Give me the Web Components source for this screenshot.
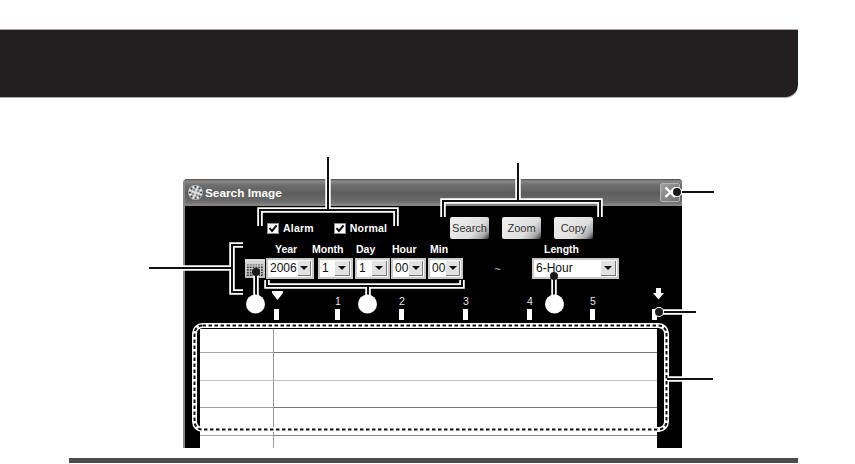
<!DOCTYPE html>
<html>
<head>
<meta charset="utf-8">
<title>Search Image</title>
<style>
  html, body { margin: 0; background: #fff; overflow: hidden; }
  body { position: relative; width: 855px; height: 464px; font-family: "Liberation Sans", Arial, sans-serif; }
</style>
</head>
<body>
  <page-banner></page-banner>
  <search-window>
    <check-row slot="checks">
      <check-box>Alarm</check-box>
      <check-box>Normal</check-box>
    </check-row>
    <win-button slot="buttons">Search</win-button>
    <win-button slot="buttons">Zoom</win-button>
    <win-button slot="buttons">Copy</win-button>
  </search-window>
  <page-rule></page-rule>
  <call-outs></call-outs>

<script>
class PageBanner extends HTMLElement {
  constructor() {
    super();
    this.attachShadow({ mode: 'open' });
  }
  connectedCallback() {
    this.shadowRoot.innerHTML = `
      <style>
        :host {
          display: block;
          box-sizing: border-box;
          width: 798px;
          height: 69px;
          margin-top: 29px;
          background: #231f20;
          border-top: 1px solid #a9a7a7;
          border-bottom: 1px solid #a9a7a7;
          border-bottom-right-radius: 13px;
        }
      </style>`;
  }
}

class PageRule extends HTMLElement {
  constructor() {
    super();
    this.attachShadow({ mode: 'open' });
  }
  connectedCallback() {
    this.shadowRoot.innerHTML = `
      <style>
        :host { display: block; width: 729px; height: 5px; margin: 10px 0 0 69px; background: #4b4b4b; }
      </style>`;
  }
}

class CheckRow extends HTMLElement {
  constructor() {
    super();
    this.attachShadow({ mode: 'open' });
  }
  connectedCallback() {
    this.shadowRoot.innerHTML = `
      <style>
        :host { display: flex; align-items: center; gap: 20px; }
      </style>
      <slot></slot>`;
  }
}

class CheckBox extends HTMLElement {
  constructor() {
    super();
    this.attachShadow({ mode: 'open' });
  }
  connectedCallback() {
    this.shadowRoot.innerHTML = `
      <style>
        :host { display: flex; align-items: center; gap: 4px; color: #fff; font: bold 10.5px "Liberation Sans", Arial, sans-serif; letter-spacing: 0.2px; }
        svg { display: block; }
      </style>
      <svg width="12" height="11" viewBox="0 0 12 11">
        <rect x="0.5" y="0.5" width="11" height="10" fill="#fff" stroke="#8d8d8d"/>
        <path d="M2.5 5.2 L5 8 L9.6 2.4" fill="none" stroke="#111" stroke-width="2"/>
      </svg>
      <span><slot></slot></span>`;
  }
}

class WinButton extends HTMLElement {
  constructor() {
    super();
    this.attachShadow({ mode: 'open' });
  }
  connectedCallback() {
    this.shadowRoot.innerHTML = `
      <style>
        :host {
          display: flex;
          align-items: center;
          justify-content: center;
          width: 39px;
          height: 22px;
          border-radius: 2px;
          color: #333;
          font: 11px "Liberation Sans", Arial, sans-serif;
          background: linear-gradient(135deg, #f0f0f0 0%, #dedede 65%, #a8a8a8 85%, #333 100%);
        }
      </style>
      <slot></slot>`;
  }
}

class ComboBox extends HTMLElement {
  constructor() {
    super();
    this.attachShadow({ mode: 'open' });
  }
  connectedCallback() {
    this.shadowRoot.innerHTML = `
      <style>
        :host {
          display: flex;
          box-sizing: border-box;
          height: 21px;
          padding: 1px;
          gap: 1px;
          background: #fff;
          border: 2px solid #c8c8c8;
          align-items: stretch;
          color: #111;
          font: 12px "Liberation Sans", Arial, sans-serif;
        }
        .value { flex: 1; padding-left: 1px; line-height: 15px; white-space: nowrap; }
        .arrow {
          display: flex;
          align-items: center;
          justify-content: center;
          width: 15px;
          background: #e2e2e2;
          border-right: 1px solid #777;
          border-bottom: 1px solid #777;
          box-sizing: border-box;
        }
        .arrow i { width: 0; height: 0; border: 4px solid transparent; border-top: 4px solid #111; border-bottom: 0; }
      </style>
      <span class="value"><slot></slot></span>
      <span class="arrow"><i></i></span>`;
  }
}

class TimeLine extends HTMLElement {
  constructor() {
    super();
    this.attachShadow({ mode: 'open' });
  }
  connectedCallback() {
    const widths = [61, 64, 64, 64, 63, 62, 5];
    const labels = ['', '1', '2', '3', '4', '5', ''];
    const cells = widths.map((w, i) => `
      <div class="cell" style="width:${w}px">
        <span class="num">${labels[i]}</span>
        <span class="tick"></span>
      </div>`).join('');
    this.shadowRoot.innerHTML = `
      <style>
        :host { display: flex; position: relative; height: 41px; margin-left: 89px; color: #e6e6e6; font: 10.5px "Liberation Sans", Arial, sans-serif; }
        .cell { display: flex; flex-direction: column; flex: none; }
        .num { width: 5px; height: 30px; padding-top: 17px; box-sizing: border-box; line-height: 11px; text-align: center; }
        .tick { width: 4.5px; height: 11px; background: #fff; }
        svg { position: absolute; top: 0; left: 0; overflow: visible; }
      </style>
      ${cells}
      <svg width="1" height="1">
        <path d="M-2 12 H9 V14 L3.5 21 L-2 14 Z" fill="#fff"/>
        <path d="M382 9 H387 V14 H390 L384.5 20.5 L379 14 H382 Z" fill="#fff"/>
      </svg>`;
  }
}

class DataGrid extends HTMLElement {
  constructor() {
    super();
    this.attachShadow({ mode: 'open' });
  }
  connectedCallback() {
    const rows = [
      [24, '#a8a8a8', '#777'],
      [28, '#c4c4c4', '#bdbdbd'],
      [27, '#a0a0a0', '#777'],
      [28, '#a8a8a8', '#888'],
      [12, 'transparent', 'transparent']
    ];
    const html = rows.map(r => `
      <div class="row" style="height:${r[0]}px">
        <div class="a" style="border-bottom-color:${r[1]}"></div>
        <div class="b" style="border-bottom-color:${r[2]}"></div>
      </div>`).join('');
    this.shadowRoot.innerHTML = `
      <style>
        :host { display: block; width: 457px; margin-left: 15px; background: #fff; }
        .row { display: grid; grid-template-columns: 74px 1fr; box-sizing: border-box; }
        .a, .b { border-bottom: 1px solid; box-sizing: border-box; }
        .a { border-right: 1px solid #999; }
      </style>
      ${html}`;
  }
}

class SearchWindow extends HTMLElement {
  constructor() {
    super();
    this.attachShadow({ mode: 'open' });
  }
  connectedCallback() {
    // mosaic dots for the title icon
    let dots = '';
    for (let a = 0; a < 16; a++) {
      const t = a * Math.PI / 8;
      dots += `<circle cx="${(7.5 + 5.6 * Math.cos(t)).toFixed(1)}" cy="${(7.5 + 5.6 * Math.sin(t)).toFixed(1)}" r="1.1" fill="${a % 2 ? '#eee' : '#444'}"/>`;
    }
    for (let a = 0; a < 8; a++) {
      const t = a * Math.PI / 4 + 0.3;
      dots += `<circle cx="${(7.5 + 3 * Math.cos(t)).toFixed(1)}" cy="${(7.5 + 3 * Math.sin(t)).toFixed(1)}" r="0.9" fill="${a % 2 ? '#777' : '#fff'}"/>`;
    }
    let cal = '';
    for (let y = 0; y < 5; y++) {
      for (let x = 0; x < 6; x++) {
        cal += `<rect x="${2 + x * 2.8}" y="${5 + y * 2.6}" width="1.8" height="1.6" fill="${y < 1 ? '#8a8a8a' : '#3a3a3a'}"/>`;
      }
    }
    this.shadowRoot.innerHTML = `
      <style>
        :host {
          display: block;
          box-sizing: border-box;
          width: 499px;
          height: 269px;
          margin: 81px 0 0 183px;
          background: #000;
          border-left: 2px solid #8a8a8a;
          border-radius: 4px 4px 0 0;
          overflow: hidden;
          font-family: "Liberation Sans", Arial, sans-serif;
        }
        .title {
          display: flex;
          align-items: center;
          box-sizing: border-box;
          height: 27px;
          padding: 0 2px 0 3px;
          gap: 2px;
          color: #fff;
          font-size: 11.8px;
          font-weight: bold;
          background: linear-gradient(#4d4d4d 0, #8a8a8a 2px, #6f6f6f 6px, #5d5d5d 14px, #6a6a6a 22px, #8a8a8a 27px);
        }
        .title span { flex: 1; }
        .close {
          display: block;
          width: 20px;
          height: 19px;
          background: linear-gradient(135deg, #a0a0a0, #6d6d6d);
          border: 1px solid #b4b4b4;
          box-sizing: border-box;
          border-radius: 2px;
        }
        .tools { display: grid; grid-template-columns: 265px auto; align-items: center; height: 22px; margin-top: 11px; }
        .checks { padding-left: 82px; }
        .buttons { display: flex; gap: 13px; }
        .heads { display: flex; height: 18px; margin-top: 1px; color: #fff; font: bold 10.5px/18px "Liberation Sans", Arial, sans-serif; white-space: nowrap; }
        .heads span { display: block; flex: none; }
        .fields { display: flex; align-items: center; height: 21px; padding-left: 60px; }
        .fields combo-box { flex: none; }
        .calendar { flex: none; display: block; width: 20px; height: 19px; margin-right: 1px; background: linear-gradient(#dcdcdc, #bdbdbd); }
        .tilde { flex: none; width: 69px; text-align: center; color: #ccc; font-size: 11px; }
      </style>
      <div class="title">
        <svg width="15" height="15" viewBox="0 0 15 15">
          <circle cx="7.5" cy="7.5" r="7.5" fill="#b5b5b5"/>
          ${dots}
          <circle cx="7.5" cy="7.5" r="1.3" fill="#eee"/>
        </svg>
        <span>Search Image</span>
        <div class="close">
          <svg width="18" height="17" viewBox="0 0 18 17" style="display:block">
            <path d="M4.5 3.5 L14 13 M14 3.5 L4.5 13" stroke="#fff" stroke-width="2.4" fill="none"/>
          </svg>
        </div>
      </div>
      <div class="tools">
        <div class="checks"><slot name="checks"></slot></div>
        <div class="buttons"><slot name="buttons"></slot></div>
      </div>
      <div class="heads">
        <span style="margin-left:90px;width:37px">Year</span>
        <span style="width:44px">Month</span>
        <span style="width:36px">Day</span>
        <span style="width:38px">Hour</span>
        <span style="width:114px">Min</span>
        <span>Length</span>
      </div>
      <div class="fields">
        <svg class="calendar" viewBox="0 0 20 19">${cal}</svg>
        <combo-box style="width:48px;margin-right:4px">2006</combo-box>
        <combo-box style="width:35px;margin-right:2px">1</combo-box>
        <combo-box style="width:35px;margin-right:1px">1</combo-box>
        <combo-box style="width:35px;margin-right:2px">00</combo-box>
        <combo-box style="width:35px">00</combo-box>
        <span class="tilde">~</span>
        <combo-box style="width:87px">6-Hour</combo-box>
      </div>
      <time-line></time-line>
      <data-grid style="margin-top:9px"></data-grid>`;
  }
}

class CallOuts extends HTMLElement {
  constructor() {
    super();
    this.attachShadow({ mode: 'open' });
  }
  connectedCallback() {
    const lines = [
      'M328 157 V210',
      'M260 226 V210 H396 V226',
      'M518 163 V201',
      'M443 217 V201 H600 V217',
      'M149 268 H232',
      'M243 245 H232 V292 H243',
      'M256 272 V296',
      'M267 280 V286 H462 V280',
      'M368 286 V296',
      'M554 276 V296',
      'M677 192 H714',
      'M659 312 H696',
      'M667 379 H713'
    ];
    const halo = lines.map(d => `<path d="${d}" stroke="#fff" stroke-width="5.5" fill="none"/>`).join('');
    const core = lines.map(d => `<path d="${d}" stroke="#111" stroke-width="2" fill="none"/>`).join('');
    // [x, y, ring radius]
    const dots = [[256, 272, 0], [554, 276, 0], [677, 192, 5], [659, 312, 5]];
    this.shadowRoot.innerHTML = `
      <style>
        :host { display: block; position: absolute; left: 0; top: 0; width: 855px; height: 464px; pointer-events: none; }
        svg { display: block; }
      </style>
      <svg width="855" height="464" viewBox="0 0 855 464">
        ${halo}
        <rect x="194.5" y="325.5" width="472" height="104" rx="8" fill="none" stroke="#fff" stroke-width="5"/>
        <rect x="194.5" y="325.5" width="472" height="104" rx="8" fill="none" stroke="#111" stroke-width="2" stroke-dasharray="3.5 2.5"/>
        ${core}
        ${dots.map(p => `<circle cx="${p[0]}" cy="${p[1]}" r="${p[2]}" fill="#fff"/><circle cx="${p[0]}" cy="${p[1]}" r="4" fill="#1a1a1a"/>`).join('')}
        <circle cx="255.5" cy="304" r="9.5" fill="#fff"/>
        <circle cx="367.5" cy="304" r="9.5" fill="#fff"/>
        <circle cx="554.5" cy="304" r="9.5" fill="#fff"/>
      </svg>`;
  }
}

customElements.define('page-banner', PageBanner);
customElements.define('page-rule', PageRule);
customElements.define('check-row', CheckRow);
customElements.define('check-box', CheckBox);
customElements.define('win-button', WinButton);
customElements.define('combo-box', ComboBox);
customElements.define('time-line', TimeLine);
customElements.define('data-grid', DataGrid);
customElements.define('search-window', SearchWindow);
customElements.define('call-outs', CallOuts);
</script>
</body>
</html>
